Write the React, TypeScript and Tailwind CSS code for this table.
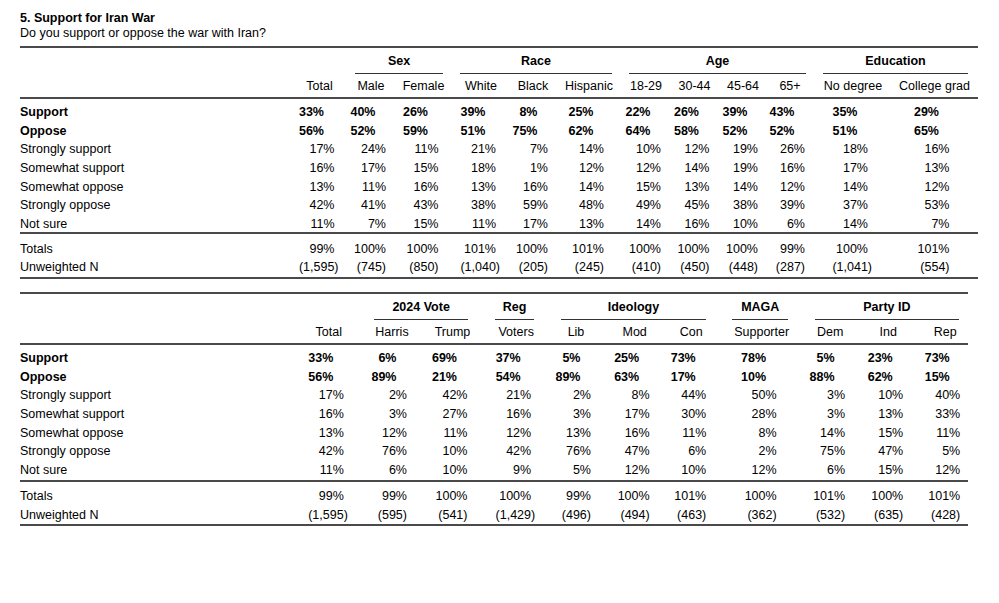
import React from "react";

type Col = { label: string; ml: string };
type Group = { label: string; cls: string };
type Row = { label: string; bold?: boolean; vals: string[] };

const t1Cols: Col[] = [
  { label: "Total", ml: "" },
  { label: "Male", ml: "ml-[7.5px]" },
  { label: "Female", ml: "ml-[8.5px]" },
  { label: "White", ml: "ml-[13.5px]" },
  { label: "Black", ml: "ml-[8px]" },
  { label: "Hispanic", ml: "ml-[12px]" },
  { label: "18-29", ml: "ml-[13px]" },
  { label: "30-44", ml: "ml-[4.5px]" },
  { label: "45-64", ml: "ml-[4.5px]" },
  { label: "65+", ml: "ml-[3px]" },
  { label: "No degree", ml: "ml-[19px]" },
  { label: "College grad", ml: "ml-[37.5px]" },
];

const t1Groups: Group[] = [
  { label: "Sex", cls: "ml-[335px] w-[88px]" },
  { label: "Race", cls: "ml-[17px] w-[152px]" },
  { label: "Age", cls: "ml-[17px] w-[177px]" },
  { label: "Education", cls: "ml-[17px] w-[145px]" },
];

const p = (s: string) => s.split(" ").map((v) => v + "%");

const t1Rows: Row[] = [
  { label: "Support", bold: true, vals: p("33 40 26 39 8 25 22 26 39 43 35 29") },
  { label: "Oppose", bold: true, vals: p("56 52 59 51 75 62 64 58 52 52 51 65") },
  { label: "Strongly support", vals: p("17 24 11 21 7 14 10 12 19 26 18 16") },
  { label: "Somewhat support", vals: p("16 17 15 18 1 12 12 14 19 16 17 13") },
  { label: "Somewhat oppose", vals: p("13 11 16 13 16 14 15 13 14 12 14 12") },
  { label: "Strongly oppose", vals: p("42 41 43 38 59 48 49 45 38 39 37 53") },
  { label: "Not sure", vals: p("11 7 15 11 17 13 14 16 10 6 14 7") },
];

const t1Foot: Row[] = [
  { label: "Totals", vals: p("99 100 100 101 100 101 100 100 100 99 100 101") },
  {
    label: "Unweighted N",
    vals: "(1,595) (745) (850) (1,040) (205) (245) (410) (450) (448) (287) (1,041) (554)".split(" "),
  },
];

const t2Cols: Col[] = [
  { label: "Total", ml: "" },
  { label: "Harris", ml: "ml-[19.2px]" },
  { label: "Trump", ml: "ml-[16.5px]" },
  { label: "Voters", ml: "ml-[19.7px]" },
  { label: "Lib", ml: "ml-[15.8px]" },
  { label: "Mod", ml: "ml-[14.7px]" },
  { label: "Con", ml: "ml-[12.6px]" },
  { label: "Supporter", ml: "ml-[26.4px]" },
  { label: "Dem", ml: "ml-[24.5px]" },
  { label: "Ind", ml: "ml-[14.1px]" },
  { label: "Rep", ml: "ml-[13px]" },
];

const t2Groups: Group[] = [
  { label: "2024 Vote", cls: "ml-[354px] w-[94.3px]" },
  { label: "Reg", cls: "ml-[26.7px] w-[39.3px]" },
  { label: "Ideology", cls: "ml-[26.7px] w-[145px]" },
  { label: "MAGA", cls: "ml-[26.3px] w-[56px]" },
  { label: "Party ID", cls: "ml-[26.3px] w-[144.7px]" },
];

const t2Rows: Row[] = [
  { label: "Support", bold: true, vals: p("33 6 69 37 5 25 73 78 5 23 73") },
  { label: "Oppose", bold: true, vals: p("56 89 21 54 89 63 17 10 88 62 15") },
  { label: "Strongly support", vals: p("17 2 42 21 2 8 44 50 3 10 40") },
  { label: "Somewhat support", vals: p("16 3 27 16 3 17 30 28 3 13 33") },
  { label: "Somewhat oppose", vals: p("13 12 11 12 13 16 11 8 14 15 11") },
  { label: "Strongly oppose", vals: p("42 76 10 42 76 47 6 2 75 47 5") },
  { label: "Not sure", vals: p("11 6 10 9 5 12 10 12 6 15 12") },
];

const t2Foot: Row[] = [
  { label: "Totals", vals: p("99 99 100 100 99 100 101 100 101 100 101") },
  {
    label: "Unweighted N",
    vals: "(1,595) (595) (541) (1,429) (496) (494) (463) (362) (532) (635) (428)".split(" "),
  },
];

function Line() {
  return <div className="h-[2px] bg-[#4a4a4a]" />;
}

function DataRow({ row, cols, labelW }: { row: Row; cols: Col[]; labelW: string }) {
  return (
    <div className={"flex h-[18.7px] items-center pt-[3px] " + (row.bold ? "font-bold" : "")}>
      <div className={labelW + " shrink-0 whitespace-nowrap"}>{row.label}</div>
      {row.vals.map((v, i) => (
        <div
          key={i}
          className={
            cols[i].ml +
            " w-11 shrink-0 whitespace-nowrap text-right " +
            (row.bold ? "pr-[17.5px]" : v.includes(",") ? "pr-[3px]" : "pr-[7px]")
          }
        >
          {v}
        </div>
      ))}
    </div>
  );
}

function Table({
  cols,
  groups,
  rows,
  foot,
  width,
  labelW,
  midPad,
}: {
  cols: Col[];
  groups: Group[];
  rows: Row[];
  foot: Row[];
  width: string;
  labelW: string;
  midPad: string;
}) {
  return (
    <div className={width}>
      <Line />
      <div className="flex">
        {groups.map((g) => (
          <div key={g.label} className={g.cls + " flex shrink-0 flex-col"}>
            <div className="flex h-[24.5px] items-center justify-center whitespace-nowrap pt-[3px] font-bold">
              {g.label}
            </div>
            <div className="h-px bg-[#333]" />
          </div>
        ))}
      </div>
      <div className="flex h-[23px] items-center pt-[3px]">
        <div className={labelW + " shrink-0"} />
        {cols.map((c) => (
          <div key={c.label} className={c.ml + " flex w-11 shrink-0 justify-center whitespace-nowrap"}>
            {c.label}
          </div>
        ))}
      </div>
      <Line />
      <div className={"pt-[3px] " + midPad}>
        {rows.map((r) => (
          <DataRow key={r.label} row={r} cols={cols} labelW={labelW} />
        ))}
      </div>
      <Line />
      <div className="pt-[3.8px] pb-[1.3px]">
        {foot.map((r) => (
          <DataRow key={r.label} row={r} cols={cols} labelW={labelW} />
        ))}
      </div>
      <Line />
    </div>
  );
}

export default function App() {
  return (
    <div className="min-h-[603px] w-[999px] bg-white pl-[20px] pt-[11px] font-['Liberation_Sans',Arial,sans-serif] text-[12.5px] text-black">
      <div className="leading-[15px] font-bold">5. Support for Iran War</div>
      <div className="leading-[15px]">Do you support or oppose the war with Iran?</div>
      <div className="mt-[5px]">
        <Table
          cols={t1Cols}
          groups={t1Groups}
          rows={t1Rows}
          foot={t1Foot}
          width="w-[958px]"
          labelW="w-[277.5px]"
          midPad="pb-0"
        />
      </div>
      <div className="mt-[13.3px]">
        <Table
          cols={t2Cols}
          groups={t2Groups}
          rows={t2Rows}
          foot={t2Foot}
          width="w-[948px]"
          labelW="w-[286.8px]"
          midPad="pb-[1.5px]"
        />
      </div>
    </div>
  );
}
